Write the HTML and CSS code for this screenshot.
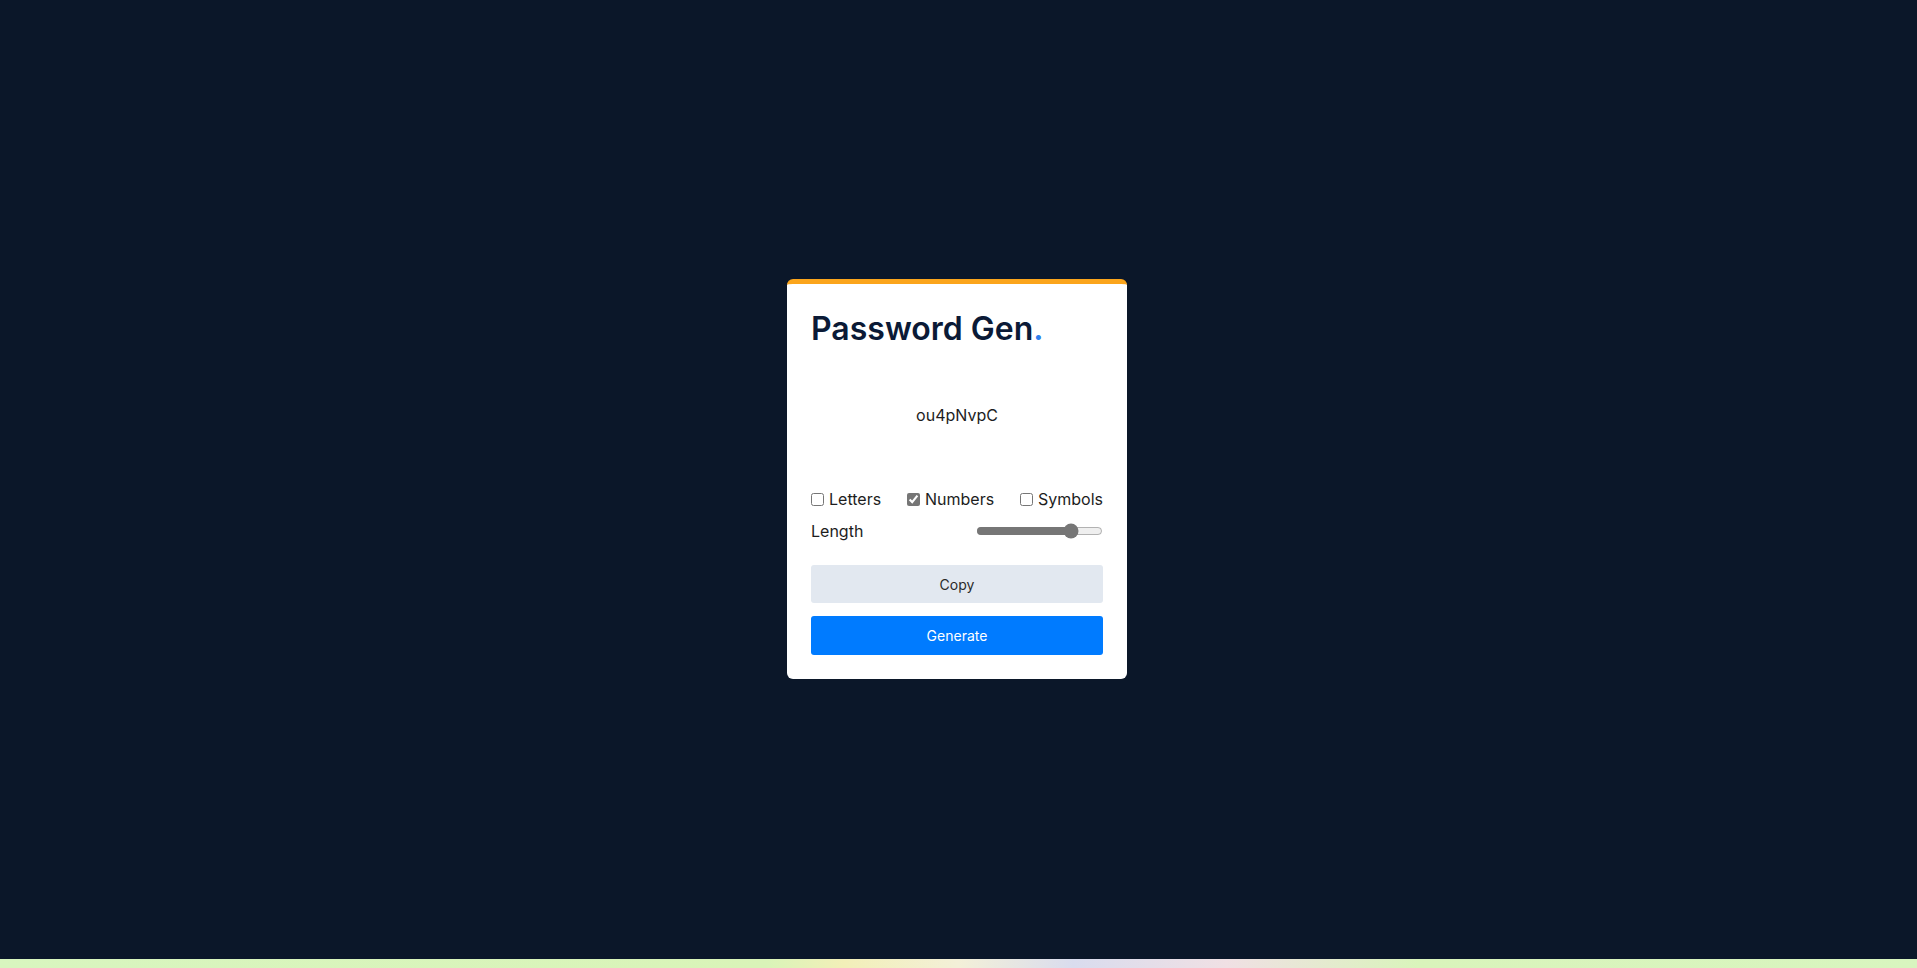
FILE: index.html
```html
<!DOCTYPE html>
<html lang="en">
<head>
<meta charset="utf-8">
<title>Password Gen</title>
<link rel="stylesheet" href="styles.css">
</head>
<body>
<main class="stage">
  <section class="card">
    <h1 class="title">Password Gen<span class="dot">.</span></h1>
    <div class="output">ou4pNvpC</div>
    <div class="options">
      <label class="opt"><input type="checkbox"> Letters</label>
      <label class="opt"><input type="checkbox" checked> Numbers</label>
      <label class="opt"><input type="checkbox"> Symbols</label>
    </div>
    <div class="length-row">
      <span>Length</span>
      <input class="range" type="range" min="0" max="100" value="78">
    </div>
    <button class="btn btn-copy">Copy</button>
    <button class="btn btn-gen">Generate</button>
  </section>
</main>
<div class="dock"></div>
</body>
</html>
```
FILE: styles.css
```css
* { box-sizing: border-box; }
html, body { margin: 0; height: 100%; }
body {
  background: #0b1729;
  font-family: Inter, "Noto Sans", sans-serif;
  display: flex;
  flex-direction: column;
}
.stage {
  flex: 1;
  display: flex;
  justify-content: center;
  align-items: flex-start;
  padding-top: 279px;
  padding-right: 3px;
}
.card {
  width: 340px;
  background: #fff;
  border-top: 5px solid #fba51c;
  border-radius: 6px;
  padding: 24px 24px 24px;
  display: flex;
  flex-direction: column;
}
.title {
  margin: 0;
  font-size: 32px;
  font-weight: 600;
  color: #0b1a36;
  line-height: 41px;
  letter-spacing: 0;
}
.dot { color: #2f80ed; }
.output {
  height: 140px;
  display: flex;
  align-items: center;
  justify-content: center;
  font-size: 16px;
  color: #1d1d1d;
  padding-bottom: 8px;
}
.options {
  display: flex;
  justify-content: space-between;
  font-size: 16px;
  color: #1d1d1d;
}
.opt { display: flex; align-items: center; }
.opt input {
  margin: 0 5px 0 0;
  width: 13px;
  height: 13px;
  accent-color: #767676;
}
.length-row {
  display: flex;
  justify-content: space-between;
  align-items: center;
  margin-top: 12px;
  font-size: 16px;
  color: #1d1d1d;
}
.range {
  width: 127px;
  margin: 0;
  accent-color: #767676;
}
.btn {
  font-family: Inter, "Noto Sans", sans-serif;
  border: none;
  border-radius: 3px;
  height: 38px;
  font-size: 14px;
  width: 100%;
}
.btn-copy {
  margin-top: 24px;
  background: #e2e8f0;
  color: #2a2a2a;
}
.btn-gen {
  margin-top: 13px;
  height: 39px;
  background: #007bff;
  color: #fff;
}
.dock {
  height: 9px;
  background: linear-gradient(90deg, #d8f5bf 0%, #d9f4b8 40%, #f2efb8 44%, #f3f0d8 50%, #d9dcee 56%, #f0e0e4 64%, #d9f4bb 74%, #d8f5bf 100%);
}
```
